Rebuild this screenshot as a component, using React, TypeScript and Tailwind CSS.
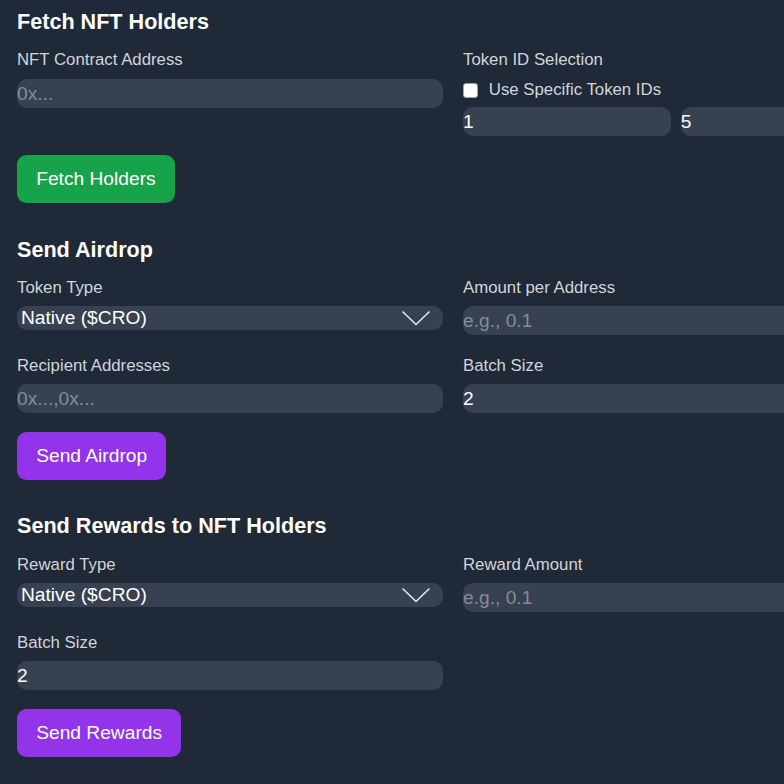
import React from "react";

const labelCls = "block text-[16.8px] leading-[24px] text-[#d1d5db] mb-[6px]";
const inputCls =
  "block w-full h-[29px] bg-[#374151] rounded-[10px] text-[19.2px] leading-[29px] text-white placeholder:text-[#868b95] outline-none p-0 border-0";
const headingCls = "text-[21.6px] leading-[34px] font-bold text-white";
const btnCls = "h-[48px] px-[19.2px] rounded-[9.6px] text-[19.2px] leading-[24px] text-white";

function Chevron() {
  return (
    <svg width="30" height="16" viewBox="0 0 30 16" className="block">
      <polyline points="1.5,1.5 15,14.5 28.5,1.5" fill="none" stroke="#e5e7eb" strokeWidth="1.6" />
    </svg>
  );
}

function Select({ value }: { value: string }) {
  return (
    <div className="flex items-center justify-between h-[24px] bg-[#374151] rounded-[10px] pl-[4px] pr-[12px]">
      <span className="text-[19.2px] leading-[24px] text-white">{value}</span>
      <Chevron />
    </div>
  );
}

export default function App() {
  return (
    <div
      className="w-[784px] h-[784px] overflow-hidden bg-[#1f2937]"
      style={{ fontFamily: '"Liberation Sans", Arial, sans-serif' }}
    >
      <div className="w-[906px] pl-[17px] pt-[5px]">
        {/* Section 1 */}
        <h2 className={headingCls + " mb-[8.5px]"}>Fetch NFT Holders</h2>
        <div className="grid grid-cols-[426px_426px] gap-x-[20px] mb-[19.5px]">
          <div>
            <label className={labelCls.replace("mb-[6px]", "mb-[7px]")}>NFT Contract Address</label>
            <input className={inputCls} placeholder="0x..." />
          </div>
          <div>
            <label className={labelCls}>Token ID Selection</label>
            <div className="flex items-center h-[24px] mb-[5.4px]">
              <span className="w-[14.5px] h-[14.5px] bg-white rounded-[3px] border border-[#9ca3af] mr-[11.3px] mt-[2px]" />
              <span className="text-[16.8px] leading-[24px] text-[#d1d5db]">Use Specific Token IDs</span>
            </div>
            <div className="flex gap-[9.6px]">
              <input className={inputCls} defaultValue="1" />
              <input className={inputCls} defaultValue="5" />
            </div>
          </div>
        </div>
        <button className={btnCls + " bg-[#16a34a]"}>Fetch Holders</button>

        {/* Section 2 */}
        <h2 className={headingCls + " mt-[30px] mb-[9px]"}>Send Airdrop</h2>
        <div className="grid grid-cols-[426px_426px] gap-x-[20px] gap-y-[18.5px] mb-[19px]">
          <div>
            <label className={labelCls}>Token Type</label>
            <Select value="Native ($CRO)" />
          </div>
          <div>
            <label className={labelCls}>Amount per Address</label>
            <input className={inputCls} placeholder="e.g., 0.1" />
          </div>
          <div>
            <label className={labelCls}>Recipient Addresses</label>
            <input className={inputCls} placeholder="0x...,0x..." />
          </div>
          <div>
            <label className={labelCls}>Batch Size</label>
            <input className={inputCls} defaultValue="2" />
          </div>
        </div>
        <button className={btnCls + " bg-[#9333ea]"}>Send Airdrop</button>

        {/* Section 3 */}
        <h2 className={headingCls + " mt-[29px] mb-[9.8px]"}>Send Rewards to NFT Holders</h2>
        <div className="grid grid-cols-[426px_426px] gap-x-[20px] gap-y-[19.5px] mb-[19px]">
          <div>
            <label className={labelCls}>Reward Type</label>
            <Select value="Native ($CRO)" />
          </div>
          <div>
            <label className={labelCls}>Reward Amount</label>
            <input className={inputCls} placeholder="e.g., 0.1" />
          </div>
          <div>
            <label className={labelCls}>Batch Size</label>
            <input className={inputCls} defaultValue="2" />
          </div>
        </div>
        <button className={btnCls + " bg-[#9333ea]"}>Send Rewards</button>
      </div>
    </div>
  );
}
